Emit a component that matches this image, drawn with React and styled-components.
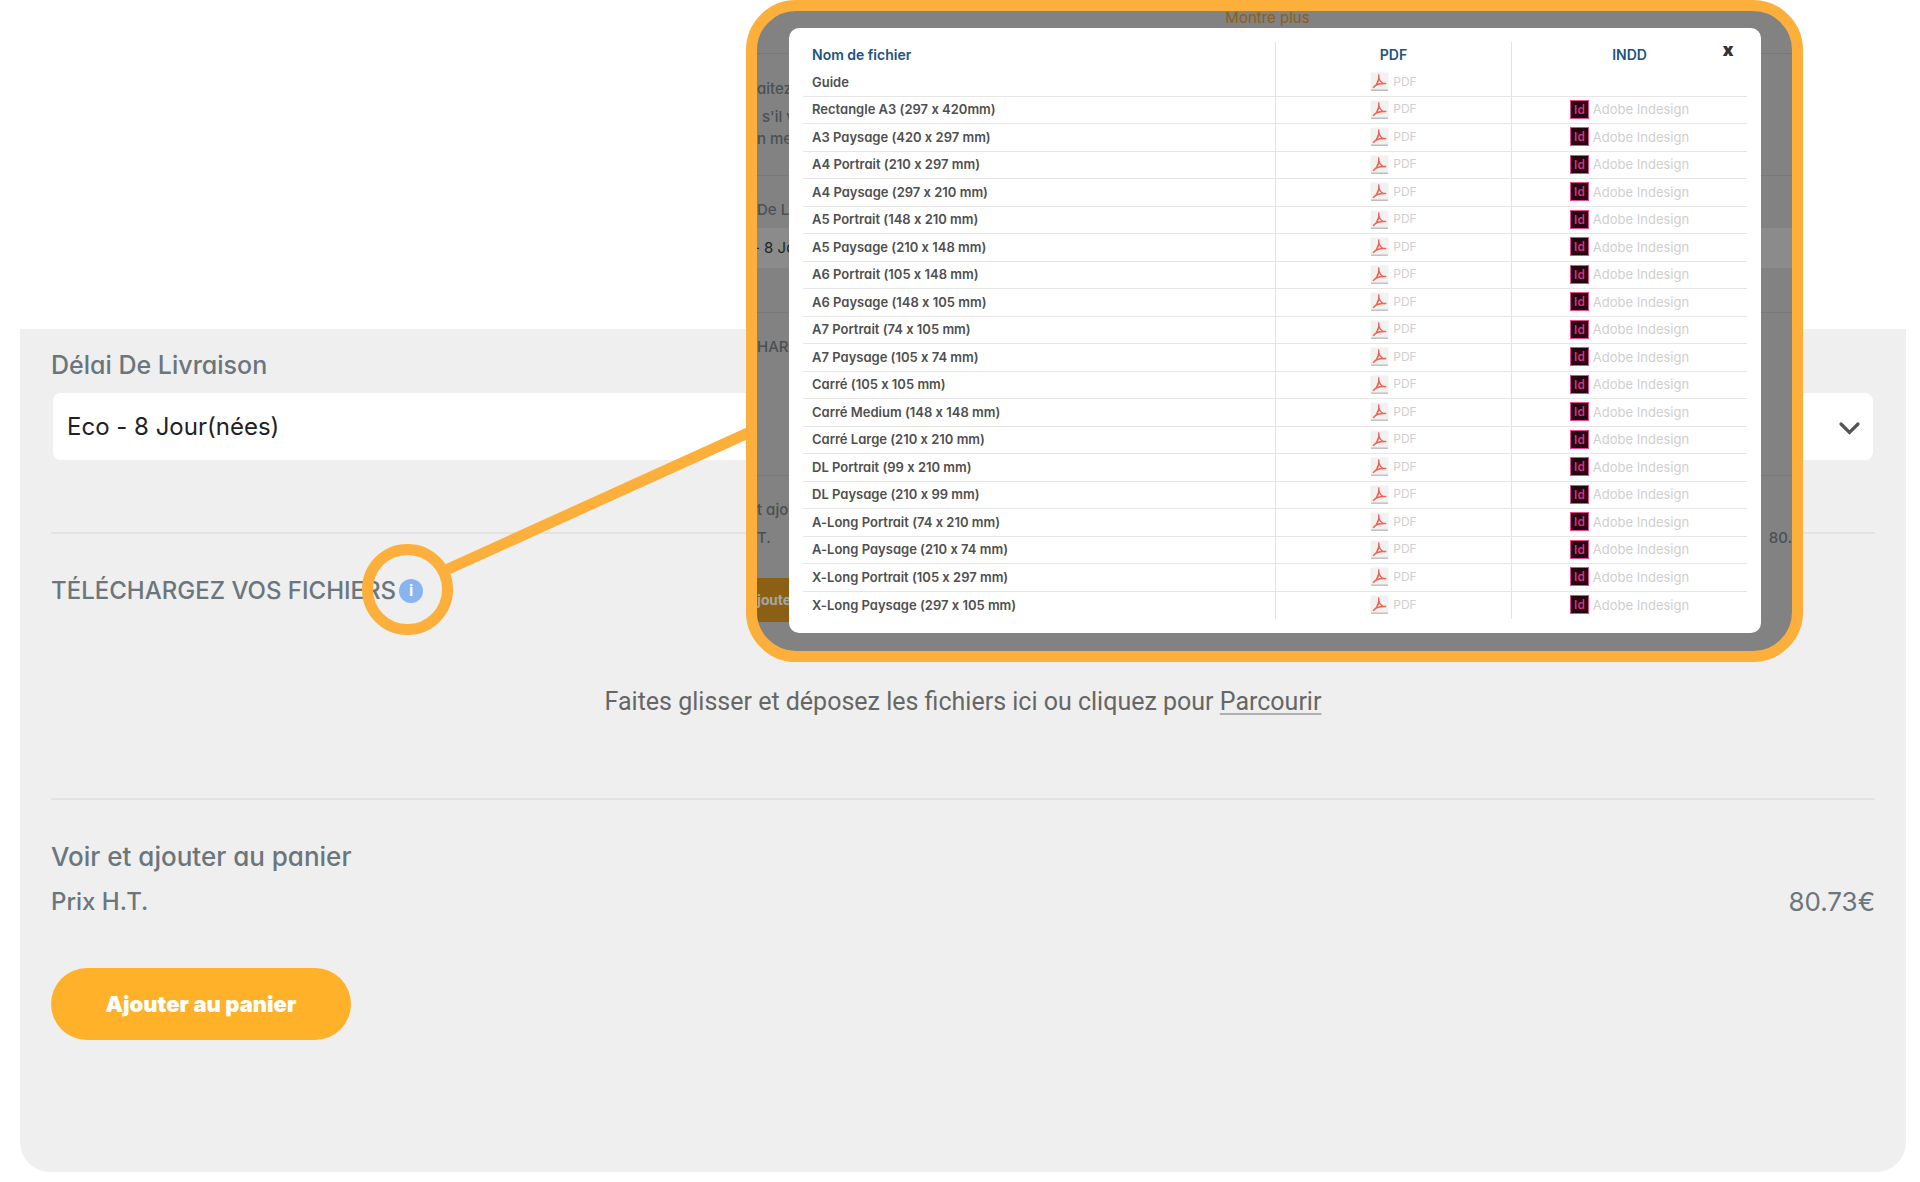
import React from "react";
import styled, { createGlobalStyle } from "styled-components";

const GlobalStyle = createGlobalStyle`
  * {
    box-sizing: border-box;
  }
  body {
    margin: 0;
    background: #ffffff;
    font-family: Inter, "Liberation Sans", sans-serif;
    font-feature-settings: "cv11", "calt" 0;
  }
`;

const Page = styled.div`
  position: relative;
  padding: 329px 14px 10px 20px;
`;
const Panel = styled.main`
  padding: 16px 31px 132px;
  background: #efefef;
  border-radius: 0 0 30px 30px;
  color: #6b767c;
  font-size: 24px;
  line-height: 40px;
  font-weight: 500;
`;
const FieldLabel = styled.label`
  display: block;
  font-size: 25px;
`;
const SelectWrap = styled.div`
  position: relative;
  margin: 8px 2px 0;
  color: #555555;
`;
const Select = styled.select`
  display: block;
  width: 100%;
  height: 67px;
  padding: 0 14px;
  border: none;
  border-radius: 8px;
  background: #ffffff;
  color: #222222;
  font: inherit;
  font-weight: 400;
  appearance: none;
`;
const Chevron = styled.svg`
  position: absolute;
  right: 12px;
  top: 24px;
  width: 24px;
  height: 24px;
  pointer-events: none;
`;
const Divider = styled.hr`
  height: 2px;
  margin: 0;
  border: none;
  background: #e2e3e3;
`;
const UploadSection = styled.section`
  margin-top: 72px;
`;
const UploadTitle = styled.h2`
  display: flex;
  align-items: center;
  gap: 3px;
  margin: 37px 0 0;
  font: inherit;
`;
const InfoButton = styled.button`
  width: 24px;
  height: 24px;
  padding: 0;
  border: none;
  border-radius: 50%;
  background: #8ab4f0;
  color: #ffffff;
  font-family: Roboto, sans-serif;
  font-size: 16px;
  line-height: 24px;
  font-weight: 700;
`;
const DropZone = styled.p`
  margin: 71px 0 76px;
  color: #666666;
  font-family: Roboto, sans-serif;
  font-size: 25px;
  font-weight: 400;
  text-align: center;
`;
const Browse = styled.a`
  color: inherit;
  text-decoration: underline;
  text-decoration-color: #b0b0b0;
  text-decoration-thickness: 2px;
  text-underline-offset: 3px;
`;
const Summary = styled.section`
  margin-top: 37px;
`;
const SummaryRow = styled.div`
  display: flex;
  justify-content: space-between;
  margin-bottom: 5px;
`;
const SummaryTitle = styled.span`
  font-size: 26px;
`;
const Price = styled.span`
  font-size: 26px;
  font-weight: 400;
`;
const AddButton = styled.button`
  width: 300px;
  height: 72px;
  margin-top: 41px;
  border: none;
  border-radius: 36px;
  background: #ffb12a;
  color: #ffffff;
  font-family: Inter, sans-serif;
  font-size: 22px;
  font-weight: 900;
`;

const Callout = styled.svg`
  position: absolute;
  left: 362px;
  top: 428px;
  width: 390px;
  height: 208px;
  pointer-events: none;
`;
const Frame = styled.aside`
  position: absolute;
  top: 0;
  left: 746px;
  right: 117px;
  height: 662px;
  border: 11px solid #fdaf3c;
  border-radius: 50px;
  background: #828282;
  overflow: hidden;
`;
const Backdrop = styled.div`
  color: #4a5053;
  font-size: 15px;
  line-height: 20px;
  font-weight: 500;
`;
const BackdropMore = styled.div`
  height: 42px;
  padding-right: 14px;
  color: #8b6014;
  line-height: 14px;
  font-weight: 400;
  text-align: center;
`;
const BackdropBlock = styled.div`
  height: ${({ $height }) => $height}px;
  padding-top: ${({ $top }) => $top}px;
  border-top: 1px solid #787878;
`;
const BackdropLine = styled.div`
  display: flex;
  justify-content: space-between;
  height: ${({ $height }) => $height || 20}px;
  padding-left: ${({ $indent }) => $indent || 0}px;
`;
const BackdropSelect = styled.div`
  height: 40px;
  margin-top: 8px;
  background: #8b8b8b;
  color: #222222;
  line-height: 40px;
  font-weight: 400;
  text-indent: -4px;
`;
const BackdropButton = styled.div`
  width: 60px;
  height: 44px;
  margin-top: 30px;
  background: #8b6014;
  color: #a5a5a5;
  font-family: Roboto, sans-serif;
  line-height: 44px;
  font-weight: 700;
`;
const Dialog = styled.div`
  position: absolute;
  top: 17px;
  left: 32px;
  right: 31px;
  padding: 14px;
  border-radius: 10px;
  background: #ffffff;
`;
const CloseButton = styled.button`
  position: absolute;
  top: 12px;
  right: 24px;
  width: 18px;
  height: 20px;
  padding: 0;
  border: none;
  background: none;
  color: #333333;
  font-family: "Open Sans", sans-serif;
  font-size: 17px;
  line-height: 20px;
  font-weight: 800;
`;
const FileTable = styled.table`
  width: 100%;
  border-collapse: separate;
  border-spacing: 0;
  table-layout: fixed;
  font-size: 13px;
  line-height: 20px;
  tbody tr:nth-child(odd) > * {
    height: 28px;
  }
  tbody tr:last-child > * {
    border-bottom: none;
  }
`;
const HeadCell = styled.th`
  width: ${({ $wide }) => ($wide ? "50%" : "25%")};
  height: 27px;
  padding: ${({ $wide }) => ($wide ? "0 9px 2px" : "0 0 2px")};
  border-left: ${({ $wide }) => ($wide ? "none" : "1px solid #e2e2e2")};
  color: #22527f;
  font-size: 14px;
  text-align: ${({ $wide }) => ($wide ? "left" : "center")};
  font-weight: 600;
`;
const NameCell = styled.th`
  height: 27px;
  padding: 0 9px 2px;
  border-bottom: 1px solid #e6e6e6;
  color: #4f4f4f;
  text-align: left;
  font-weight: 600;
`;
const FileCell = styled.td`
  height: 27px;
  padding: 0 0 2px;
  border-bottom: 1px solid #e6e6e6;
  border-left: 1px solid #e2e2e2;
`;
const FileLink = styled.a`
  display: flex;
  align-items: center;
  justify-content: center;
  gap: 4px;
  color: #cfcfcf;
  font-size: ${({ $small }) => ($small ? 12 : 13)}px;
  text-decoration: none;
`;
const FileIcon = styled.svg`
  width: 19px;
  height: 19px;
`;
const IndesignIcon = styled.span`
  width: 19px;
  height: 19px;
  border: 1px solid #e8468f;
  background: #24040f;
  color: #e2338a;
  font-family: "Open Sans", sans-serif;
  font-size: 12px;
  line-height: 17px;
  font-weight: 600;
  text-align: center;
`;

const files = [
  "Guide",
  "Rectangle A3 (297 x 420mm)",
  "A3 Paysage (420 x 297 mm)",
  "A4 Portrait (210 x 297 mm)",
  "A4 Paysage (297 x 210 mm)",
  "A5 Portrait (148 x 210 mm)",
  "A5 Paysage (210 x 148 mm)",
  "A6 Portrait (105 x 148 mm)",
  "A6 Paysage (148 x 105 mm)",
  "A7 Portrait (74 x 105 mm)",
  "A7 Paysage (105 x 74 mm)",
  "Carré (105 x 105 mm)",
  "Carré Medium (148 x 148 mm)",
  "Carré Large (210 x 210 mm)",
  "DL Portrait (99 x 210 mm)",
  "DL Paysage (210 x 99 mm)",
  "A-Long Portrait (74 x 210 mm)",
  "A-Long Paysage (210 x 74 mm)",
  "X-Long Portrait (105 x 297 mm)",
  "X-Long Paysage (297 x 105 mm)",
];

const PdfIcon = () => (
  <FileIcon viewBox="0 0 19 19" aria-hidden="true">
    <rect x="0.5" y="0.5" width="18" height="18" rx="1" fill="#f1f1f1" />
    <path d="M1 18.2h17" stroke="#bdbdbd" strokeWidth="1.4" />
    <path
      d="M8.8 3C9.4 6.5 8.4 9.5 6.6 12.2C5.6 13.8 4.6 14.9 3.4 15.4M8.8 3C8.6 6.5 9.6 8.9 11.8 10.5C13 11.4 14.4 11.7 15.7 11.5M3.4 15.4C5.2 12.8 9 11.2 15.7 11.5"
      fill="none"
      stroke="#ee6352"
      strokeWidth="1.4"
      strokeLinecap="round"
    />
  </FileIcon>
);

const FileRow = ({ name }) => (
  <tr>
    <NameCell scope="row">{name}</NameCell>
    <FileCell>
      <FileLink href="#pdf" $small>
        <PdfIcon />
        PDF
      </FileLink>
    </FileCell>
    <FileCell>
      {name !== "Guide" && (
        <FileLink href="#indd">
          <IndesignIcon>Id</IndesignIcon>
          Adobe Indesign
        </FileLink>
      )}
    </FileCell>
  </tr>
);

const BackdropPage = () => (
  <Backdrop aria-hidden="true">
    <BackdropMore>Montre plus</BackdropMore>
    <BackdropBlock $height={122} $top={25}>
      <BackdropLine $height={28}>aitez</BackdropLine>
      <BackdropLine $height={22} $indent={5}>s'il v</BackdropLine>
      <BackdropLine>n me</BackdropLine>
    </BackdropBlock>
    <BackdropBlock $height={137} $top={24}>
      <BackdropLine>De Li</BackdropLine>
      <BackdropSelect>- 8 Jo</BackdropSelect>
    </BackdropBlock>
    <BackdropBlock $height={163} $top={24}>
      <BackdropLine>HARG</BackdropLine>
    </BackdropBlock>
    <BackdropBlock $height={176} $top={24}>
      <BackdropLine $height={28}>t ajo</BackdropLine>
      <BackdropLine>
        <span>T.</span>
        <span>80.</span>
      </BackdropLine>
      <BackdropButton>joute</BackdropButton>
    </BackdropBlock>
  </Backdrop>
);

const FilesDialog = () => (
  <Dialog role="dialog" aria-label="Nom de fichier">
    <FileTable>
      <thead>
        <tr>
          <HeadCell $wide>Nom de fichier</HeadCell>
          <HeadCell>PDF</HeadCell>
          <HeadCell>INDD</HeadCell>
        </tr>
      </thead>
      <tbody>
        {files.map((name) => (
          <FileRow key={name} name={name} />
        ))}
      </tbody>
    </FileTable>
    <CloseButton type="button">x</CloseButton>
  </Dialog>
);

const App = () => {
  return (
    <>
      <GlobalStyle />
      <Page>
        <Panel>
          <FieldLabel htmlFor="delivery">Délai De Livraison</FieldLabel>
          <SelectWrap>
            <Select id="delivery" defaultValue="eco">
              <option value="eco">Eco - 8 Jour(nées)</option>
            </Select>
            <Chevron viewBox="0 0 24 24" aria-hidden="true">
              <path
                d="M4 7l8.5 8.5L21 7"
                fill="none"
                stroke="currentColor"
                strokeWidth="3.2"
                strokeLinecap="round"
              />
            </Chevron>
          </SelectWrap>
          <UploadSection>
            <Divider />
            <UploadTitle>
              TÉLÉCHARGEZ VOS FICHIERS
              <InfoButton type="button">i</InfoButton>
            </UploadTitle>
            <DropZone>
              Faites glisser et déposez les fichiers ici ou cliquez pour{" "}
              <Browse href="#parcourir">Parcourir</Browse>
            </DropZone>
            <Divider />
          </UploadSection>
          <Summary>
            <SummaryRow>
              <SummaryTitle>Voir et ajouter au panier</SummaryTitle>
            </SummaryRow>
            <SummaryRow>
              <span>Prix H.T.</span>
              <Price>80.73€</Price>
            </SummaryRow>
            <AddButton type="button">Ajouter au panier</AddButton>
          </Summary>
        </Panel>
        <Callout viewBox="0 0 390 208" fill="none" stroke="#fdaf3c" strokeWidth="11">
          <circle cx="45.5" cy="161.5" r="40" />
          <path d="M84 142L388 4" />
        </Callout>
        <Frame>
          <BackdropPage />
          <FilesDialog />
        </Frame>
      </Page>
    </>
  );
};

export default App;
